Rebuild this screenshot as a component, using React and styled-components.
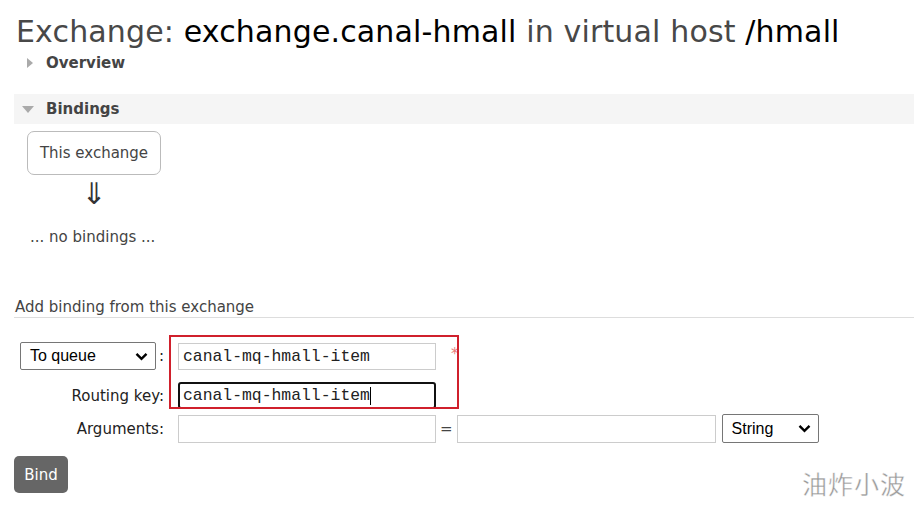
import React from 'react';
import styled, { createGlobalStyle } from 'styled-components';

const GlobalStyle = createGlobalStyle`
  html, body {
    margin: 0;
    padding: 0;
    background: #fff;
  }
  body {
    font-family: "DejaVu Sans", Verdana, sans-serif;
    color: #444;
  }
`;

const Page = styled.div`
  position: relative;
  width: 914px;
  height: 509px;
  overflow: hidden;
  padding-left: 14px;
  box-sizing: border-box;
`;

const Title = styled.h1`
  margin: 0;
  padding-top: 13px;
  padding-left: 2px;
  font-size: 30px;
  font-weight: normal;
  line-height: 38px;
  color: #484848;
  white-space: nowrap;
  letter-spacing: 0.15px;
`;

const Strong = styled.span`
  color: #000;
`;

const SectionHead = styled.div`
  display: flex;
  align-items: center;
  height: ${(p) => (p.open ? '30px' : '24px')};
  margin-top: ${(p) => p.top}px;
  padding-left: ${(p) => (p.open ? '8px' : '13px')};
  background: ${(p) => (p.open ? '#f5f5f5' : 'transparent')};
  font-size: 15px;
  font-weight: bold;
  color: #444;
`;

const Triangle = styled.span`
  width: 0;
  height: 0;
  margin-right: ${(p) => (p.down ? '12px' : '13px')};
  ${(p) =>
    p.down
      ? `border-left: 6px solid transparent;
         border-right: 6px solid transparent;
         border-top: 7px solid #aaa;`
      : `border-top: 5px solid transparent;
         border-bottom: 5px solid transparent;
         border-left: 6px solid #aaa;`}
`;

const Diagram = styled.div`
  margin-left: 13px;
  width: 134px;
`;

const ExchangeBox = styled.div`
  margin-top: 7px;
  height: 44px;
  box-sizing: border-box;
  border: 1px solid #bbb;
  border-radius: 7px;
  display: flex;
  align-items: center;
  justify-content: center;
  font-size: 15px;
  color: #444;
`;

const Arrow = styled.div`
  margin-top: 4px;
  height: 30px;
  line-height: 30px;
  text-align: center;
  font-size: 30px;
  color: #333;
`;

const NoBindings = styled.div`
  margin-top: 18px;
  margin-left: 16px;
  line-height: 20px;
  font-size: 15px;
  color: #444;
`;

const SubHeading = styled.div`
  margin-top: 50px;
  line-height: 20px;
  padding-left: 1px;
  border-bottom: 1px solid #ddd;
  font-size: 15px;
  color: #444;
`;

const Form = styled.div`
  position: relative;
  margin-top: 24px;
`;

const Row = styled.div`
  display: grid;
  grid-template-columns: 150px auto;
  column-gap: 14px;
  align-items: center;
  margin-top: ${(p) => p.top || 0}px;
`;

const Label = styled.div`
  display: flex;
  align-items: center;
  justify-content: flex-end;
  gap: 3px;
  font-size: 15px;
  color: #222;
`;

const Fields = styled.div`
  display: flex;
  align-items: center;
`;

const Select = styled.div`
  display: flex;
  align-items: center;
  justify-content: space-between;
  box-sizing: border-box;
  width: ${(p) => p.w}px;
  height: ${(p) => p.h}px;
  margin-left: ${(p) => p.ml || 0}px;
  padding: 0 7px 0 9px;
  border: 1px solid #767676;
  border-radius: 2px;
  font-family: "Liberation Sans", Arial, sans-serif;
  font-size: 16px;
  color: #000;
`;

const Input = styled.div`
  box-sizing: border-box;
  width: ${(p) => p.w || 258}px;
  height: ${(p) => p.h || 27}px;
  display: flex;
  align-items: center;
  padding-left: ${(p) => (p.focus ? 3 : 4)}px;
  border: ${(p) => (p.focus ? '2px solid #111' : '1px solid #ccc')};
  border-radius: ${(p) => (p.focus ? '3px' : '0')};
  font-family: "Liberation Mono", "Courier New", monospace;
  font-size: 16.4px;
  color: #222;
  white-space: nowrap;
`;

const Caret = styled.span`
  display: inline-block;
  width: 1px;
  height: 18px;
  background: #000;
`;

const Required = styled.span`
  margin-left: 15px;
  margin-top: -4px;
  color: #e87b7b;
  font-size: 15px;
`;

const Equals = styled.span`
  margin: 0 4px;
  font-size: 15px;
  color: #444;
`;

const Highlight = styled.div`
  position: absolute;
  left: 155px;
  top: -7px;
  width: 290px;
  height: 74px;
  box-sizing: border-box;
  border: 2px solid #d0202c;
  pointer-events: none;
`;

const BindButton = styled.button`
  display: block;
  margin-top: 13px;
  width: 54px;
  height: 37px;
  border: none;
  border-radius: 5px;
  background: #666;
  color: #fff;
  font-family: "DejaVu Sans", Verdana, sans-serif;
  font-size: 15px;
  padding: 0;
`;

const Watermark = styled.div`
  position: absolute;
  right: 8px;
  bottom: 8px;
  font-family: "Noto Sans CJK SC", sans-serif;
  font-size: 25px;
  letter-spacing: 1px;
  color: #9a9a9a;
  -webkit-text-stroke: 0.4px #fff;
`;

function Chevron() {
  return (
    <svg width="13" height="9" viewBox="0 0 13 9">
      <path d="M1.5 1.8 L6.5 6.8 L11.5 1.8" fill="none" stroke="#000" strokeWidth="2.4" />
    </svg>
  );
}

function App() {
  return (
    <Page>
      <GlobalStyle />
      <Title>
        Exchange: <Strong>exchange.canal-hmall</Strong> in virtual host <Strong>/hmall</Strong>
      </Title>
      <SectionHead top={0}>
        <Triangle />
        Overview
      </SectionHead>
      <SectionHead open top={19}>
        <Triangle down />
        Bindings
      </SectionHead>
      <Diagram>
        <ExchangeBox>This exchange</ExchangeBox>
        <Arrow>⇓</Arrow>
      </Diagram>
      <NoBindings>... no bindings ...</NoBindings>
      <SubHeading>Add binding from this exchange</SubHeading>
      <Form>
        <Row>
          <Label>
            <Select w={136} h={28}>
              To queue
              <Chevron />
            </Select>
            :
          </Label>
          <Fields>
            <Input>canal-mq-hmall-item</Input>
            <Required>*</Required>
          </Fields>
        </Row>
        <Row top={12}>
          <Label>Routing key:</Label>
          <Fields>
            <Input focus h={27}>
              canal-mq-hmall-item
              <Caret />
            </Input>
          </Fields>
        </Row>
        <Row top={5}>
          <Label>Arguments:</Label>
          <Fields>
            <Input h={28} />
            <Equals>=</Equals>
            <Input w={259} h={28} />
            <Select w={97} h={29} ml={6}>
              String
              <Chevron />
            </Select>
          </Fields>
        </Row>
        <Highlight />
      </Form>
      <BindButton>Bind</BindButton>
      <Watermark>油炸小波</Watermark>
    </Page>
  );
}

export default App;
